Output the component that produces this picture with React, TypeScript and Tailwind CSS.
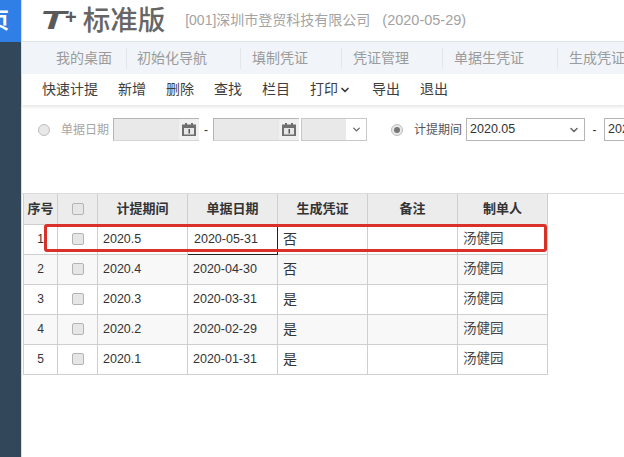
import { ChevronDown } from "lucide-react";

const font = { fontFamily: '"Liberation Sans", "Noto Sans CJK SC", sans-serif' };

const navItems = [
  { label: "我的桌面", cls: "w-[105px] pl-[34px]" },
  { label: "初始化导航", cls: "w-[114px] pl-[10px]" },
  { label: "填制凭证", cls: "w-[101px] pl-[11px]" },
  { label: "凭证管理", cls: "w-[101px] pl-[11px]" },
  { label: "单据生凭证", cls: "w-[115px] pl-[11px]" },
  { label: "生成凭证", cls: "w-[100px] pl-[11px]" },
];

const rows = [
  { no: 1, period: "2020.5", date: "2020-05-31", made: "否" },
  { no: 2, period: "2020.4", date: "2020-04-30", made: "否" },
  { no: 3, period: "2020.3", date: "2020-03-31", made: "是" },
  { no: 4, period: "2020.2", date: "2020-02-29", made: "是" },
  { no: 5, period: "2020.1", date: "2020-01-31", made: "是" },
];

function CalendarIcon() {
  return (
    <svg width="14" height="13" viewBox="0 0 14 13" className="shrink-0">
      <rect x="0" y="1.5" width="14" height="11.5" fill="#6f6f6f" />
      <rect x="2" y="5" width="10" height="6.5" fill="#e6e6e6" />
      <rect x="3" y="0" width="2" height="3" fill="#6f6f6f" />
      <rect x="9" y="0" width="2" height="3" fill="#6f6f6f" />
      <rect x="6.5" y="6" width="1.5" height="4.5" fill="#555" />
    </svg>
  );
}

function DateInput() {
  return (
    <div className="flex h-[23px] w-[86px] shrink-0 items-center justify-end border border-r-0 border-[#b5b5b5] border-b-[#d5d5d5] bg-[#e9e9e9]">
      <div className="flex h-full w-[20px] items-center justify-center bg-[#f0f0f0]">
        <CalendarIcon />
      </div>
    </div>
  );
}

function Check() {
  return <span className="block h-3 w-3 rounded-[2px] border border-[#b4b4b4] bg-[#e6e6e6]" />;
}

function Radio({ checked }: { checked?: boolean }) {
  return (
    <span className="flex h-3 w-3 shrink-0 items-center justify-center rounded-full border border-[#bdbdbd] bg-[#e8e8e8]">
      {checked && <span className="h-[6px] w-[6px] rounded-full bg-[#777]" />}
    </span>
  );
}

export default function App() {
  return (
    <div style={font} className="flex h-[457px] w-[624px] overflow-hidden bg-white text-[#333]">
      <aside className="flex w-[21px] shrink-0 flex-col overflow-hidden bg-[#33475a]">
        <div className="flex h-[42px] items-center justify-end overflow-hidden bg-[#2f7fe6] pr-[12px]">
          <span className="shrink-0 text-[22px] leading-none font-bold text-white">页</span>
        </div>
      </aside>
      <div className="w-px shrink-0 bg-[#d8dde2]" />

      <main className="min-w-0 flex-1">
        <header className="flex h-[41px] items-center overflow-hidden bg-white pl-[18px]">
          <span className="inline-block w-[25px] origin-left scale-x-[1.7] text-[25px] leading-none font-black text-[#5a5a5a] italic">
            T
          </span>
          <span className="mr-[6px] mb-[8px] text-[20px] leading-none font-black text-[#5a5a5a]">+</span>
          <span className="shrink-0 text-[27.5px] leading-none font-medium text-[#666]">标准版</span>
          <span className="ml-[20px] text-[14px] whitespace-nowrap text-[#a3a3a3]">[001]深圳市登贸科技有限公司</span>
          <span className="ml-[12px] text-[14.5px] whitespace-nowrap text-[#a3a3a3]">(2020-05-29)</span>
        </header>

        <nav className="flex h-[33px] items-center overflow-hidden border-t border-[#dfe4e8] bg-[#f1f5f9] text-[14px] text-[#9b9b9b]">
          {navItems.map((item, i) => (
            <div
              key={item.label}
              className={`shrink-0 whitespace-nowrap ${item.cls} ${i < navItems.length - 1 ? "border-r border-[#e3e7ea]" : ""}`}
            >
              {item.label}
            </div>
          ))}
        </nav>

        <div className="flex h-[31px] items-center gap-5 pl-[20px] text-[14px] whitespace-nowrap text-[#3d3d3d] shadow-[0_2px_3px_rgba(0,0,0,0.1)]">
          <span>快速计提</span>
          <span>新增</span>
          <span>删除</span>
          <span>查找</span>
          <span>栏目</span>
          <span className="flex items-center">
            打印
            <ChevronDown size={12} strokeWidth={3.5} className="ml-px" />
          </span>
          <span className="ml-[1px]">导出</span>
          <span>退出</span>
        </div>

        <section className="h-[89px] overflow-hidden border-b border-[#dcdcdc] pt-[13px]">
          <div className="flex w-[700px] items-center text-[12px] whitespace-nowrap">
            <span className="ml-[16px]">
              <Radio />
            </span>
            <span className="ml-[11px] text-[#a5a5a5]">单据日期</span>
            <span className="ml-[4px]">
              <DateInput />
            </span>
            <span className="w-[14px] shrink-0 text-center">-</span>
            <DateInput />
            <div className="ml-[2px] flex h-[23px] w-[66px] shrink-0 border border-[#c8c8c8]">
              <div className="flex-1 bg-[#e9e9e9]" />
              <div className="flex w-[20px] items-center justify-center bg-white">
                <ChevronDown size={11} strokeWidth={3} className="text-[#666]" />
              </div>
            </div>
            <span className="ml-[24px]">
              <Radio checked />
            </span>
            <span className="ml-[11px] text-[#555]">计提期间</span>
            <div className="ml-[4px] flex h-[23px] w-[119px] shrink-0 items-center justify-between border border-[#b5b5b5] pr-[4px] pl-[3px] text-[12.5px] text-[#333]">
              2020.05
              <ChevronDown size={12} strokeWidth={3} className="text-[#666]" />
            </div>
            <span className="w-[19px] shrink-0 text-center">-</span>
            <div className="flex h-[23px] w-[100px] shrink-0 items-center border border-[#b5b5b5] pl-[3px] text-[12.5px] text-[#333]">
              2020.05
            </div>
          </div>
        </section>

        <div className="relative ml-px w-[525px]">
          <table className="w-[525px] table-fixed border-collapse text-[12.5px]">
            <colgroup>
              <col className="w-[34px]" />
              <col className="w-[40px]" />
              <col className="w-[90px]" />
              <col className="w-[90px]" />
              <col className="w-[90px]" />
              <col className="w-[90px]" />
              <col className="w-[90px]" />
            </colgroup>
            <thead>
              <tr className="h-[30px] bg-[#ececec] text-[13px] font-bold text-[#333]">
                <th className="border border-t-0 border-[#cfcfcf]">序号</th>
                <th className="border border-t-0 border-[#cfcfcf]">
                  <div className="flex justify-center">
                    <Check />
                  </div>
                </th>
                <th className="border border-t-0 border-[#cfcfcf]">计提期间</th>
                <th className="border border-t-0 border-[#cfcfcf]">单据日期</th>
                <th className="border border-t-0 border-[#cfcfcf]">生成凭证</th>
                <th className="border border-t-0 border-[#cfcfcf]">备注</th>
                <th className="border border-t-0 border-[#cfcfcf]">制单人</th>
              </tr>
            </thead>
            <tbody>
              {rows.map((r) => (
                <tr key={r.no} className={`h-[30px] ${r.no % 2 === 0 ? "bg-[#f8f8f8]" : "bg-white"}`}>
                  <td className="border border-[#cfcfcf] text-center text-[12px]">{r.no}</td>
                  <td className="border border-[#cfcfcf]">
                    <div className="flex justify-center">
                      <Check />
                    </div>
                  </td>
                  <td className="border border-[#cfcfcf] pl-[5px]">{r.period}</td>
                  <td
                    className={
                      r.no === 1
                        ? "border border-[#222] border-t-[#cfcfcf] pl-[6px]"
                        : "border border-[#cfcfcf] pl-[5px]"
                    }
                  >
                    {r.date}
                  </td>
                  <td className="border border-[#cfcfcf] pl-[5px] text-[14px]">{r.made}</td>
                  <td className="border border-[#cfcfcf]" />
                  <td className="border border-[#cfcfcf] pl-[5px] text-[13.5px] text-[#444]">汤健园</td>
                </tr>
              ))}
            </tbody>
          </table>
          {/* red annotation drawn over the first row */}
          <div className="pointer-events-none absolute top-[30px] left-[21px] h-[28px] w-[503px] rounded-[3px] border-[3px] border-[#d9302a]" />
        </div>
      </main>
    </div>
  );
}
